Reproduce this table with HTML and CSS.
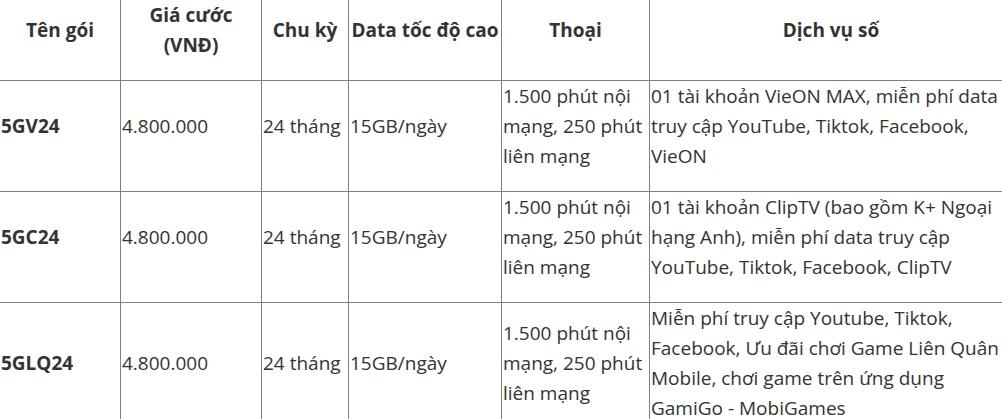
FILE: index.html
```
<!DOCTYPE html>
<html lang="vi">
<head>
<meta charset="utf-8">
<link rel="stylesheet" href="styles.css">
</head>
<body>
<table class="plans">
  <colgroup>
    <col class="c1"><col class="c2"><col class="c3"><col class="c4"><col class="c5"><col class="c6">
  </colgroup>
  <thead>
    <tr>
      <th>Tên gói</th>
      <th>Giá cước<br>(VNĐ)</th>
      <th>Chu kỳ</th>
      <th>Data tốc độ cao</th>
      <th>Thoại</th>
      <th>Dịch vụ số</th>
    </tr>
  </thead>
  <tbody>
    <tr>
      <td class="name">5GV24</td>
      <td>4.800.000</td>
      <td>24 tháng</td>
      <td>15GB/ngày</td>
      <td>1.500 phút nội mạng, 250 phút liên mạng</td>
      <td>01 tài khoản VieON MAX, miễn phí data truy cập YouTube, Tiktok, Facebook, VieON</td>
    </tr>
    <tr>
      <td class="name">5GC24</td>
      <td>4.800.000</td>
      <td>24 tháng</td>
      <td>15GB/ngày</td>
      <td>1.500 phút nội mạng, 250 phút liên mạng</td>
      <td>01 tài khoản ClipTV (bao gồm K+ Ngoại hạng Anh), miễn phí data truy cập YouTube, Tiktok, Facebook, ClipTV</td>
    </tr>
    <tr>
      <td class="name">5GLQ24</td>
      <td>4.800.000</td>
      <td>24 tháng</td>
      <td>15GB/ngày</td>
      <td>1.500 phút nội mạng, 250 phút liên mạng</td>
      <td>Miễn phí truy cập Youtube, Tiktok, Facebook, Ưu đãi chơi Game Liên Quân Mobile, chơi game trên ứng dụng GamiGo - MobiGames</td>
    </tr>
  </tbody>
</table>
</body>
</html>
```
FILE: styles.css
```
html, body {
  margin: 0;
  padding: 0;
  background: #ffffff;
  overflow: hidden;
}
body {
  font-family: "Open Sans", "Noto Sans", "DejaVu Sans", sans-serif;
  font-size: 19px;
  line-height: 30px;
  color: #333333;
}
.plans {
  border-collapse: collapse;
  table-layout: fixed;
  width: 1013px;
  margin: -1px 0 0 -1px;
}
.c1 { width: 121px; }
.c2 { width: 141px; }
.c3 { width: 87px; }
.c4 { width: 153px; }
.c5 { width: 148px; }
.c6 { width: 363px; }
.plans th,
.plans td {
  border: 1px solid #808080;
  padding: 0 1px 20px 1px;
  vertical-align: middle;
}
.plans th {
  font-weight: 700;
  text-align: center;
}
.plans td {
  text-align: left;
}
.plans td.name {
  font-weight: 700;
}
```
